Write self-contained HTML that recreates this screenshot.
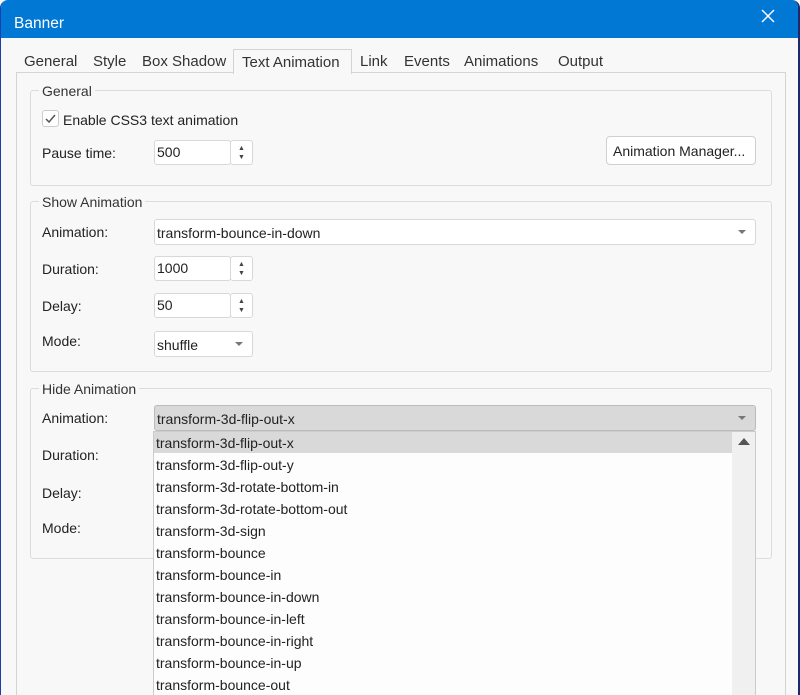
<!DOCTYPE html>
<html><head><style>
*{box-sizing:border-box;margin:0;padding:0}
body{width:800px;height:695px;overflow:hidden;background:#f8f8f8;font-family:"Liberation Sans",sans-serif;font-size:14px;color:#222;position:relative}
.a{position:absolute}
.win{left:0;top:0;width:800px;height:695px;border-left:1px solid #1a3fb0;border-right:2px solid #1b2a6e;border-radius:8px 8px 0 0;overflow:hidden}
.title{left:0;top:0;width:800px;height:38px;background:#0078d4;color:#fff;font-size:15.5px}
.panel{left:15px;top:72px;width:770px;height:640px;border:1px solid #d4d4d4;background:#f8f8f8}
.tab{top:53px;font-size:15px;color:#333}
.tabsel{left:232px;top:49px;width:119px;height:25px;background:#f8f8f8;border:1px solid #d4d4d4;border-bottom:none;padding:4px 0 0 8px;font-size:15px;color:#333}
.grp{border:1px solid #dcdcdc;border-radius:3px}
.leg{background:#f8f8f8;padding:0 3px;font-size:14px;color:#333}
.inp{background:#fff;border:1px solid #d8d8d8;border-radius:3px;padding:3px 0 0 2px}
.spin{background:#fff;border:1px solid #d8d8d8;border-radius:3px;width:23px;height:25px;font-size:7px;color:#444;text-align:center;line-height:9px;padding-top:3px}
.btn{background:#fff;border:1px solid #d0d0d0;border-radius:4px;padding:6px 0 0 6px}
.arr{width:0;height:0;border-left:4px solid transparent;border-right:4px solid transparent;border-top:4px solid #777}
.item{left:155px;font-size:14px}
</style></head><body>
<div class="a win">
<div class="a title"><span class="a" style="left:13px;top:15px">Banner</span>
<svg class="a" style="left:760px;top:9px" width="14" height="14"><path d="M1 1L13 13M13 1L1 13" stroke="#fff" stroke-width="1.5"/></svg></div>
<div class="a panel"></div>
<span class="a tab" style="left:23px">General</span>
<span class="a tab" style="left:92px">Style</span>
<span class="a tab" style="left:141px">Box Shadow</span>
<div class="a tabsel">Text Animation</div>
<span class="a tab" style="left:359px">Link</span>
<span class="a tab" style="left:403px">Events</span>
<span class="a tab" style="left:463px">Animations</span>
<span class="a tab" style="left:557px">Output</span>

<div class="a grp" style="left:29px;top:90px;width:742px;height:96px"></div>
<span class="a leg" style="left:38px;top:83px">General</span>
<div class="a" style="left:41px;top:110px;width:17px;height:17px;border:1px solid #ccc;border-radius:3px;background:#fff"></div>
<svg class="a" style="left:43px;top:113px" width="13" height="11"><path d="M2 6L5 9L11 2" stroke="#555" stroke-width="1.5" fill="none"/></svg>
<span class="a" style="left:62px;top:112px">Enable CSS3 text animation</span>
<span class="a" style="left:41px;top:145px">Pause time:</span>
<div class="a inp" style="left:153px;top:140px;width:77px;height:25px">500</div>
<div class="a spin" style="left:229px;top:140px">▲<br>▼</div>
<div class="a btn" style="left:605px;top:136px;width:150px;height:29px">Animation Manager...</div>

<div class="a grp" style="left:29px;top:201px;width:742px;height:171px"></div>
<span class="a leg" style="left:38px;top:194px">Show Animation</span>
<span class="a" style="left:41px;top:224px">Animation:</span>
<div class="a inp" style="left:153px;top:219px;width:602px;height:26px;padding-top:5px">transform-bounce-in-down</div>
<div class="a arr" style="left:737px;top:230px"></div>
<span class="a" style="left:41px;top:261px">Duration:</span>
<div class="a inp" style="left:153px;top:256px;width:77px;height:25px">1000</div>
<div class="a spin" style="left:229px;top:256px">▲<br>▼</div>
<span class="a" style="left:41px;top:298px">Delay:</span>
<div class="a inp" style="left:153px;top:293px;width:77px;height:25px">50</div>
<div class="a spin" style="left:229px;top:293px">▲<br>▼</div>
<span class="a" style="left:41px;top:333px">Mode:</span>
<div class="a inp" style="left:153px;top:331px;width:99px;height:26px;padding-top:5px">shuffle</div>
<div class="a arr" style="left:234px;top:342px"></div>

<div class="a grp" style="left:29px;top:388px;width:742px;height:171px"></div>
<span class="a leg" style="left:38px;top:381px">Hide Animation</span>
<span class="a" style="left:41px;top:410px">Animation:</span>
<div class="a inp" style="left:153px;top:405px;width:602px;height:26px;padding-top:5px;background:#d9d9d9;border-color:#bbb">transform-3d-flip-out-x</div>
<div class="a arr" style="left:737px;top:416px"></div>
<span class="a" style="left:41px;top:447px">Duration:</span>
<span class="a" style="left:41px;top:485px">Delay:</span>
<span class="a" style="left:41px;top:520px">Mode:</span>

<div class="a" style="left:152px;top:431px;width:603px;height:270px;background:#fdfdfd;border:1px solid #ccc"></div>
<div class="a" style="left:153px;top:432px;width:578px;height:21px;background:#d9d9d9"></div>
<div class="a" style="left:731px;top:432px;width:23px;height:270px;background:#f0f0f0"></div>
<div class="a" style="left:737px;top:438px;width:0;height:0;border-left:6px solid transparent;border-right:6px solid transparent;border-bottom:7px solid #555"></div>
<span class="a item" style="top:435px">transform-3d-flip-out-x</span>
<span class="a item" style="top:457px">transform-3d-flip-out-y</span>
<span class="a item" style="top:479px">transform-3d-rotate-bottom-in</span>
<span class="a item" style="top:501px">transform-3d-rotate-bottom-out</span>
<span class="a item" style="top:523px">transform-3d-sign</span>
<span class="a item" style="top:545px">transform-bounce</span>
<span class="a item" style="top:567px">transform-bounce-in</span>
<span class="a item" style="top:589px">transform-bounce-in-down</span>
<span class="a item" style="top:611px">transform-bounce-in-left</span>
<span class="a item" style="top:633px">transform-bounce-in-right</span>
<span class="a item" style="top:655px">transform-bounce-in-up</span>
<span class="a item" style="top:677px">transform-bounce-out</span>
</div>
</body></html>
